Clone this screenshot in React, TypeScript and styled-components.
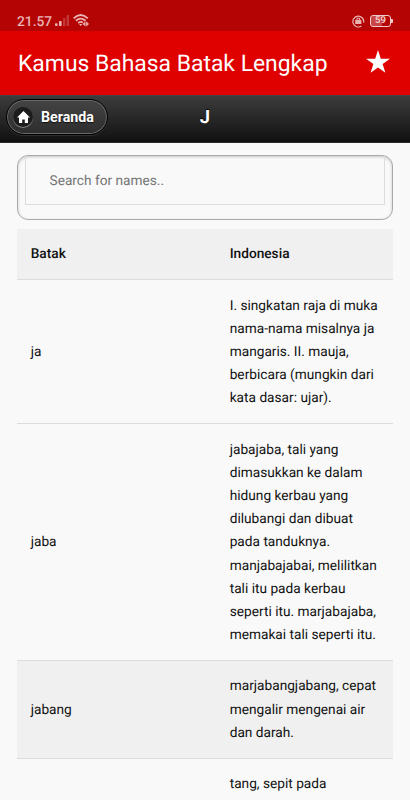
import React from "react";
import styled, { createGlobalStyle } from "styled-components";

const GlobalStyle = createGlobalStyle`
  * { box-sizing: border-box; }
  html, body, #root { height: 100%; }
  body {
    margin: 0;
    overflow: hidden;
    background: #f9f9f9;
    color: #111;
    font-family: Roboto, "Liberation Sans", sans-serif;
    text-rendering: geometricPrecision;
  }
`;

const Screen = styled.div`
  height: 800px;
  overflow: hidden;
  display: flex;
  flex-direction: column;
`;

const StatusBar = styled.div`
  flex: none;
  height: 31px;
  padding: 12px 17px 0 17px;
  background: #b40404;
  display: flex;
  justify-content: space-between;
  color: #e9b4b4;
`;

const StatusGroup = styled.div`
  display: flex;
  align-items: flex-start;
`;

const Clock = styled.span`
  font-size: 13.8px;
  font-weight: 500;
  line-height: 20px;
  width: 38px;
  white-space: nowrap;
`;

const AppBar = styled.header`
  flex: none;
  height: 64px;
  padding: 0 20px 0 18px;
  background: #df0000;
  color: #fff;
  display: flex;
  align-items: center;
  justify-content: space-between;
`;

const AppTitle = styled.h1`
  margin: 2px 0 0;
  font-size: 22.9px;
  font-weight: 400;
  line-height: 30px;
  white-space: nowrap;
`;

const NavBar = styled.nav`
  flex: none;
  height: 48px;
  padding: 3px 6px 0;
  background: linear-gradient(#3c3c3c, #111);
  border-top: 1px solid #444;
  border-bottom: 1px solid #2a2a2a;
  display: grid;
  grid-template-columns: 102px 1fr 102px;
  align-items: start;
  color: #fff;
  text-shadow: 0 -1px 1px #000;
`;

const HomeButton = styled.button`
  height: 36px;
  width: 102px;
  padding: 0 0 0 6px;
  border: 1px solid #000;
  border-radius: 18px;
  background: linear-gradient(#444, #2d2d2d);
  box-shadow: inset 0 0 0 1px #696969, 0 1px 0 rgba(255, 255, 255, 0.1);
  display: flex;
  align-items: center;
  gap: 8px;
  color: #fff;
  font: 700 14.2px Roboto, sans-serif;
  text-shadow: 0 1px 1px #111;
`;

const HomeDisc = styled.span`
  width: 20px;
  height: 20px;
  border-radius: 50%;
  background: #1c1c1c;
  box-shadow: 0 1px 0 rgba(255, 255, 255, 0.4);
  display: flex;
  align-items: center;
  justify-content: center;
`;

const NavTitle = styled.h2`
  margin: 0;
  font-size: 18.4px;
  font-weight: 700;
  line-height: 38px;
  text-align: center;
`;

const Content = styled.main`
  flex: 1;
  min-height: 0;
  overflow: hidden;
  padding: 12px 17px 0;
`;

const SearchFrame = styled.div`
  height: 65px;
  padding: 0 7px;
  border: 1.5px solid #aaa;
  border-radius: 11px;
  box-shadow: inset 0 1px 3px rgba(0, 0, 0, 0.2);
`;

const SearchInput = styled.input`
  display: block;
  width: 100%;
  height: 49px;
  padding: 2px 0 0 23.5px;
  border: 1px solid #dcdcdc;
  border-top: 0;
  border-radius: 0;
  outline: 0;
  background: transparent;
  font: 400 13.7px Roboto, sans-serif;
  text-rendering: geometricPrecision;
  color: #222;
  &::placeholder { color: #757575; opacity: 1; }
`;

const Table = styled.div`
  margin-top: 8.7px;
`;

const Row = styled.div<{ $shaded?: boolean; $bold?: boolean }>`
  display: grid;
  grid-template-columns: 199px 1fr;
  align-items: center;
  padding: 14.6px 0 13px 13.7px;
  border-bottom: 1px solid #dcdcdc;
  background: ${(p) => (p.$shaded ? "#f0f0f0" : "transparent")};
  font-size: 13.7px;
  line-height: 23.1px;
  font-weight: ${(p) => (p.$bold ? 500 : 400)};
`;

const Cell = styled.div`
  white-space: pre-line;
`;

const words = [
  {
    batak: "ja",
    indonesia:
      "I. singkatan raja di muka\nnama-nama misalnya ja\nmangaris. II. mauja,\nberbicara (mungkin dari\nkata dasar: ujar).",
  },
  {
    batak: "jaba",
    indonesia:
      "jabajaba, tali yang\ndimasukkan ke dalam\nhidung kerbau yang\ndilubangi dan dibuat\npada tanduknya.\nmanjabajabai, melilitkan\ntali itu pada kerbau\nseperti itu. marjabajaba,\nmemakai tali seperti itu.",
  },
  {
    batak: "jabang",
    shaded: true,
    indonesia: "marjabangjabang, cepat\nmengalir mengenai air\ndan darah.",
  },
  { batak: "", indonesia: "tang, sepit pada" },
];

const SignalIcon = () => (
  <svg width="15" height="12" viewBox="0 0 15 12" fill="currentColor">
    <rect x="0" y="8.3" width="2.6" height="2.7" rx="0.8" />
    <rect x="4" y="6" width="2.6" height="5" rx="0.6" />
    <rect x="8" y="3" width="2.4" height="8" rx="0.6" opacity="0.3" />
    <rect x="11.6" y="0" width="2.4" height="11" rx="0.6" opacity="0.3" />
  </svg>
);

const WifiIcon = () => (
  <svg width="17" height="13" viewBox="0 0 17 13" fill="none" stroke="currentColor">
    <path d="M.6 4.3Q7.7-2.2 14.8 4.3M2.9 6.7q4.8-4.1 9.6 0M5.2 9q2.5-2 4.7-.4" strokeWidth="1.8" />
    <path d="M6 9.9h3.4l-1.7 2z" fill="currentColor" stroke="none" />
    <path d="M12.5 7.2v5.4L9.7 9.9zM13.2 7.2v5.4L16 9.9z" fill="currentColor" stroke="none" />
  </svg>
);

const LockIcon = () => (
  <svg width="13" height="13" viewBox="0 0 13 13" fill="none" stroke="currentColor">
    <path d="M9.4 11A5.4 5.4 0 1 1 11.6 7.6" strokeWidth="1.2" />
    <path d="M4.9 5.6V4.4a1.4 1.4 0 0 1 2.8 0v1.2" strokeWidth="1.2" />
    <rect x="3.2" y="5" width="6.2" height="4" rx=".5" fill="currentColor" stroke="none" />
  </svg>
);

const Battery = styled.span`
  width: 21px;
  height: 12px;
  margin: 3px 2px 0 5px;
  border: 1px solid currentColor;
  border-radius: 3px;
  background: linear-gradient(90deg, #c94444 0 58%, transparent 58%);
  font-size: 9.5px;
  font-weight: 700;
  line-height: 10.5px;
  text-align: center;
  color: #f0caca;
  position: relative;
  &::after {
    content: "";
    position: absolute;
    right: -3px;
    top: 3px;
    width: 2px;
    height: 4px;
    background: currentColor;
    border-radius: 0 1px 1px 0;
  }
`;

const IconSlot = styled.span<{ $top: number; $left?: number }>`
  display: flex;
  margin-top: ${(p) => p.$top}px;
  margin-left: ${(p) => p.$left ?? 0}px;
`;

export default function App() {
  return (
    <Screen>
      <GlobalStyle />
      <StatusBar>
        <StatusGroup>
          <Clock>21.57</Clock>
          <IconSlot $top={3}><SignalIcon /></IconSlot>
          <IconSlot $top={2} $left={3}><WifiIcon /></IconSlot>
        </StatusGroup>
        <StatusGroup>
          <IconSlot $top={3}><LockIcon /></IconSlot>
          <Battery>59</Battery>
        </StatusGroup>
      </StatusBar>
      <AppBar>
        <AppTitle>Kamus Bahasa Batak Lengkap</AppTitle>
        <IconSlot $top={-3}>
          <svg width="24" height="23" viewBox="0 0 24 23" fill="#fff">
            <path d="M12 0l2.8 8.7H24l-7.4 5.4 2.8 8.7L12 17.4l-7.4 5.4 2.8-8.7L0 8.7h9.2z" />
          </svg>
        </IconSlot>
      </AppBar>
      <NavBar>
        <HomeButton>
          <HomeDisc>
            <svg width="13" height="12" viewBox="0 0 13 12" fill="#fff">
              <path d="M6.5 0L13 6.5h-2V12H7.8V8.6H5.2V12H2V6.5H0z" />
            </svg>
          </HomeDisc>
          Beranda
        </HomeButton>
        <NavTitle>J</NavTitle>
      </NavBar>
      <Content>
        <SearchFrame>
          <SearchInput placeholder="Search for names.." />
        </SearchFrame>
        <Table>
          <Row $shaded $bold>
            <Cell>Batak</Cell>
            <Cell>Indonesia</Cell>
          </Row>
          {words.map((w, i) => (
            <Row key={i} $shaded={w.shaded}>
              <Cell>{w.batak}</Cell>
              <Cell>{w.indonesia}</Cell>
            </Row>
          ))}
        </Table>
      </Content>
    </Screen>
  );
}
